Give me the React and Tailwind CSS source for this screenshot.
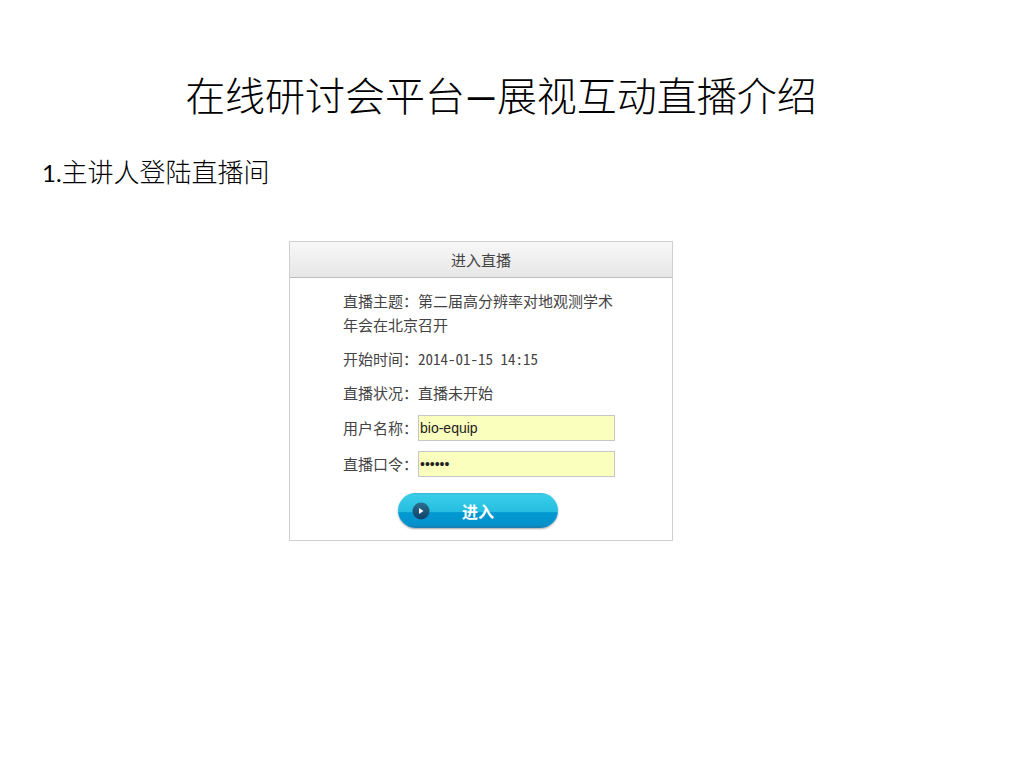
function InfoRow({ label, children }) {
  return (
    <div className="flex leading-6">
      <dt className="whitespace-nowrap">{label}</dt>
      <dd>{children}</dd>
    </div>
  );
}

function Field({ id, label, ...props }) {
  return (
    <div className="flex items-center">
      <label htmlFor={id} className="w-[75px] shrink-0 whitespace-nowrap">
        {label}
      </label>
      <input
        id={id}
        className="h-[26px] w-[197px] border border-[#c6c6c6] bg-[#faffbd] px-px font-['Liberation_Sans',sans-serif] text-sm text-[#222] outline-none"
        {...props}
      />
    </div>
  );
}

function PlayIcon() {
  return (
    <svg viewBox="0 0 18 18" className="h-[18px] w-[18px]" aria-hidden="true">
      <defs>
        <linearGradient id="play-bg" x1="0" y1="0" x2="0" y2="1">
          <stop offset="0" stopColor="#2c7090" />
          <stop offset="0.5" stopColor="#1d5779" />
          <stop offset="1" stopColor="#0d4470" />
        </linearGradient>
      </defs>
      <circle cx="9" cy="9" r="8.5" fill="url(#play-bg)" />
      <path d="M7 6l4.5 3L7 12z" fill="#fff" />
    </svg>
  );
}

export default function App() {
  return (
    <div className="min-h-screen bg-white font-['Noto_Sans_CJK_SC',sans-serif] text-black">
      {/* Slide heading */}
      <h1 className="pt-[68px] pr-[22px] text-center font-['Lato','Noto_Sans_CJK_SC',sans-serif] text-[40px] leading-[56px] font-light">
        在线研讨会平台
        <span className="font-normal">—</span>
        展视互动直播介绍
      </h1>
      <h2 className="mt-8 pl-[42px] font-['Lato','Noto_Sans_CJK_SC',sans-serif] text-[26px] leading-8 font-light">
        <span className="text-2xl font-normal">1.</span>
        主讲人登陆直播间
      </h2>

      {/* Login panel */}
      <main className="mt-[52px] pr-[62px]">
        <section className="mx-auto max-w-[384px] border border-[#cfcfcf] pb-3 text-[15px] text-[#444]">
          <h3 className="border-b border-[#bdbdbd] bg-linear-to-b from-[#f8f8f8] to-[#e6e6e6] text-center leading-[35px]">
            进入直播
          </h3>
          <form className="pt-[11px] pr-14 pl-[53px]" onSubmit={(e) => e.preventDefault()}>
            <div className="flex flex-col gap-[10px]">
              <p className="leading-6">直播主题：第二届高分辨率对地观测学术年会在北京召开</p>
              <dl className="flex flex-col gap-[10px]">
                <InfoRow label="开始时间：">
                  <time dateTime="2014-01-15T14:15" className="[font-feature-settings:'hwid']">
                    2014-01-15 14:15
                  </time>
                </InfoRow>
                <InfoRow label="直播状况：">直播未开始</InfoRow>
              </dl>
              <Field id="username" label="用户名称：" type="text" defaultValue="bio-equip" />
              <Field id="password" label="直播口令：" type="password" defaultValue="123456" />
            </div>
            <button
              type="submit"
              className="mt-4 ml-[55px] grid h-[35px] w-[160px] grid-cols-[18px_1fr_18px] items-center rounded-full bg-[linear-gradient(#3ab8d6_0,#38cde8_2px,#27bde0_54%,#0399d0_56%,#0492cc_90%,#1c7cae_100%)] px-[14px] text-base font-bold text-white shadow-[0_1px_2px_rgba(0,0,0,0.35)]"
            >
              <PlayIcon />
              <span>进入</span>
            </button>
          </form>
        </section>
      </main>
    </div>
  );
}
